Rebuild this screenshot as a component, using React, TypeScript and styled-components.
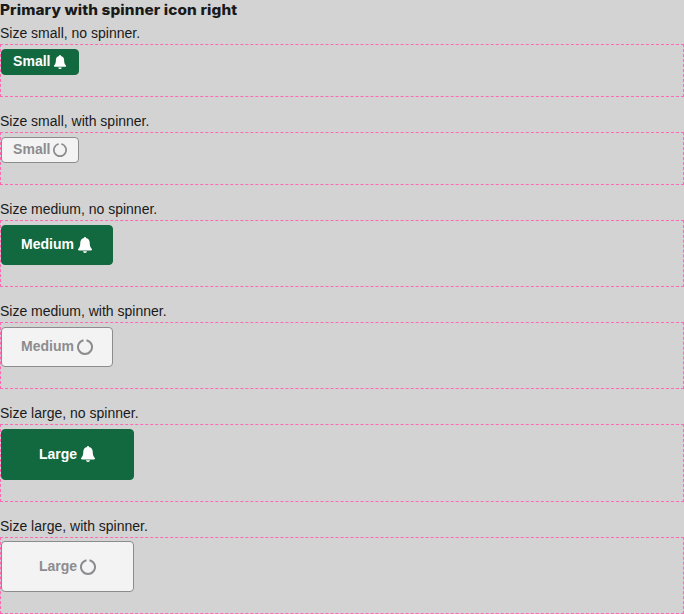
import React from "react";
import styled, { createGlobalStyle, css } from "styled-components";

type Size = "small" | "medium" | "large";

const GlobalStyle = createGlobalStyle`
  *, *::before, *::after { box-sizing: border-box; }
  html { background: #d3d3d3; }
  body {
    margin: 0;
    background: #d3d3d3;
    color: #1a1a1a;
    font: 14px/20px "Liberation Sans", Arial, sans-serif;
    overflow: hidden;
  }
`;

const Heading = styled.h4`
  width: max-content;
  margin: 0;
  height: 24px;
  font: 800 14px/20px Inter, sans-serif;
  letter-spacing: 0.1px;
  transform: scaleX(1.095);
  transform-origin: left top;
`;

const Example = styled.section`
  margin-bottom: 15px;

  &:last-child {
    margin-bottom: 0;
  }
`;

const Label = styled.div`
  height: 20px;
  line-height: 18px;
`;

const Preview = styled.div<{ $tight: boolean }>`
  border: 1px dashed #ff69b4;
  padding: ${(p) => (p.$tight ? 3 : 4)}px 0 21px;
`;

const dimensions = {
  small: css`width: 78px; height: 26px; padding: 0 0 2px 0.6px;`,
  medium: css`width: 112px; height: 40px; padding: 0 0 2px;`,
  large: css`width: 133px; height: 51px; padding: 0 0 1px;`,
};

const Button = styled.button<{ $size: Size; $busy: boolean }>`
  display: flex;
  align-items: center;
  justify-content: center;
  gap: 3px;
  margin: 0;
  border: 1px solid ${(p) => (p.$busy ? "#8c8c8f" : "#12693f")};
  border-radius: 4px;
  background: ${(p) => (p.$busy ? "#f3f3f3" : "#12693f")};
  color: ${(p) => (p.$busy ? "#8c8c8f" : "#fff")};
  font: 700 14px/20px "Liberation Sans", Arial, sans-serif;
  ${(p) => dimensions[p.$size]}
`;

const Icon = styled.svg<{ $size: Size; $raised?: boolean }>`
  flex: none;
  display: block;
  width: ${(p) => (p.$size === "small" ? 14 : 16)}px;
  height: ${(p) => (p.$size === "small" ? 14 : 16)}px;
  margin-top: ${(p) => (p.$raised ? 0 : 2)}px;
`;

const Bell = ({ size }: { size: Size }) => (
  <Icon $size={size} $raised={size === "large"} viewBox="0 0 16 16" fill="currentColor">
    <path d="M7.1 1V.7a.9.9 0 0 1 1.8 0V1c2.3.4 3.8 2.2 3.8 4.6 0 3.1.6 4.8 1.9 6.1.8.8.4 1.7-.5 1.7H1.9c-.9 0-1.3-.9-.5-1.7 1.3-1.3 1.9-3 1.9-6.1C3.3 3.2 4.8 1.4 7.1 1zM6 14.2h4a2 1.8 0 0 1-4 0z" />
  </Icon>
);

const Spinner = ({ size }: { size: Size }) => (
  <Icon $size={size} viewBox="0 0 16 16" fill="none" stroke="currentColor" strokeWidth="2">
    <path d="M9.5 1.16A7 7 0 1 1 6.5 1.16" />
  </Icon>
);

const names = { small: "Small", medium: "Medium", large: "Large" };
const sizes: Size[] = ["small", "medium", "large"];

export default function App() {
  return (
    <>
      <GlobalStyle />
      <Heading>Primary with spinner icon right</Heading>
      {sizes.flatMap((size) =>
        [false, true].map((busy) => (
          <Example key={`${size}-${busy}`}>
            <Label>{`Size ${size}, ${busy ? "with" : "no"} spinner.`}</Label>
            <Preview $tight={size === "large" && busy}>
              <Button $size={size} $busy={busy}>
                {names[size]}
                {busy ? <Spinner size={size} /> : <Bell size={size} />}
              </Button>
            </Preview>
          </Example>
        ))
      )}
    </>
  );
}
